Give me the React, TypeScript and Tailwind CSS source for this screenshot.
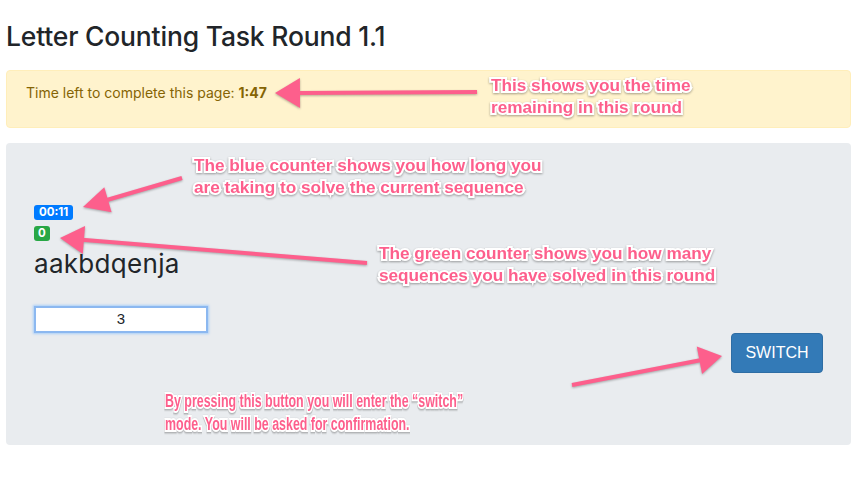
import React from 'react';

type Pt = [number, number];

// one pink arrow: shaft from tail to the base of a triangle head that ends at tip
const Arrow = ({ tail, tip, len = 25, half = 14 }: { tail: Pt; tip: Pt; len?: number; half?: number }) => {
  const dx = tip[0] - tail[0];
  const dy = tip[1] - tail[1];
  const d = Math.hypot(dx, dy);
  const ux = dx / d;
  const uy = dy / d;
  const bx = tip[0] - ux * len;
  const by = tip[1] - uy * len;
  const px = -uy * half;
  const py = ux * half;
  return (
    <g>
      <line x1={tail[0]} y1={tail[1]} x2={bx + ux * 2} y2={by + uy * 2} stroke="#fd5f8c" strokeWidth={4} />
      <polygon points={`${tip[0]},${tip[1]} ${bx + px},${by + py} ${bx - px},${by - py}`} fill="#fd5f8c" />
    </g>
  );
};

const Note = ({ className, children }: { className: string; children: React.ReactNode }) => (
  <div
    className={`absolute font-bold leading-[22px] text-[#fd5f8c] whitespace-nowrap [font-family:'Liberation_Sans',Arial,sans-serif] [-webkit-text-stroke:4px_white] [paint-order:stroke_fill] drop-shadow-[0_1px_1px_rgba(0,0,0,0.35)] ${className}`}
  >
    {children}
  </div>
);

export default function App() {
  return (
    <div className="relative w-[866px] h-[486px] bg-white pt-[18px] text-[#212529] [font-family:Inter,'Liberation_Sans',sans-serif]">
      <div className="ml-[6px] w-[845px]">
        <h2 className="text-[26.5px] leading-[36px] font-medium tracking-[-0.2px]">Letter Counting Task Round 1.1</h2>

        <div className="mt-[16px] h-[58px] rounded border border-[#ffeeba] bg-[#fff3cd] pl-[19px] pt-[12px] text-[14px] leading-[20px] text-[#856404]">
          Time left to complete this page: <b className="font-bold">1:47</b>
        </div>

        <div className="mt-[15px] h-[302px] rounded bg-[#e9ecef] px-[28px] pt-[62px]">
          <div className="flex flex-col items-start gap-[6px]">
            <span className="h-[15px] rounded-[3px] bg-[#007bff] px-[5px] text-[11.5px] font-bold leading-[15px] text-white">00:11</span>
            <span className="h-[15px] rounded-[3px] bg-[#28a745] px-[4px] text-[11.5px] font-bold leading-[15px] text-white">0</span>
          </div>
          <div className="mt-[7px] text-[26px] leading-[32px] tracking-[0.3px]">aakbdqenja</div>
          <div className="mt-[26px] flex h-[27px] w-[174px] items-center justify-center border-2 border-[#8cb8f0] bg-white text-[15px] shadow-[0_0_2px_1px_rgba(128,189,255,0.6)] [font-family:'Liberation_Sans',sans-serif]">
            3
          </div>
          <div className="flex justify-end">
            <button className="h-[40px] w-[92px] rounded-[4px] border border-[#2e6da4] bg-[#337ab7] text-[16px] font-medium text-white [font-family:'Liberation_Sans',sans-serif]">
              SWITCH
            </button>
          </div>
        </div>
      </div>

      <svg className="pointer-events-none absolute left-0 top-0 h-[486px] w-[866px] drop-shadow-[0_1px_1px_rgba(0,0,0,0.3)]" viewBox="0 0 866 486">
        <Arrow tail={[477, 92]} tip={[275, 93]} len={25} half={15} />
        <Arrow tail={[182, 178]} tip={[83, 207]} len={26} half={13} />
        <Arrow tail={[367, 263]} tip={[60, 238]} len={24} half={14} />
        <Arrow tail={[572, 385]} tip={[722, 356]} len={23} half={14} />
      </svg>

      <Note className="left-[491px] top-[74px] text-[17.2px]">
        This shows you the time
        <br />
        remaining in this round
      </Note>
      <Note className="left-[194px] top-[154px] text-[17.2px]">
        The blue counter shows you how long you
        <br />
        are taking to solve the current sequence
      </Note>
      <Note className="left-[379px] top-[242px] text-[17.2px]">
        The green counter shows you how many
        <br />
        sequences you have solved in this round
      </Note>
      <Note className="left-[165px] top-[390px] text-[18px] leading-[23px] origin-left scale-x-[0.69]">
        By pressing this button you will enter the “switch”
        <br />
        mode. You will be asked for confirmation.
      </Note>
    </div>
  );
}
